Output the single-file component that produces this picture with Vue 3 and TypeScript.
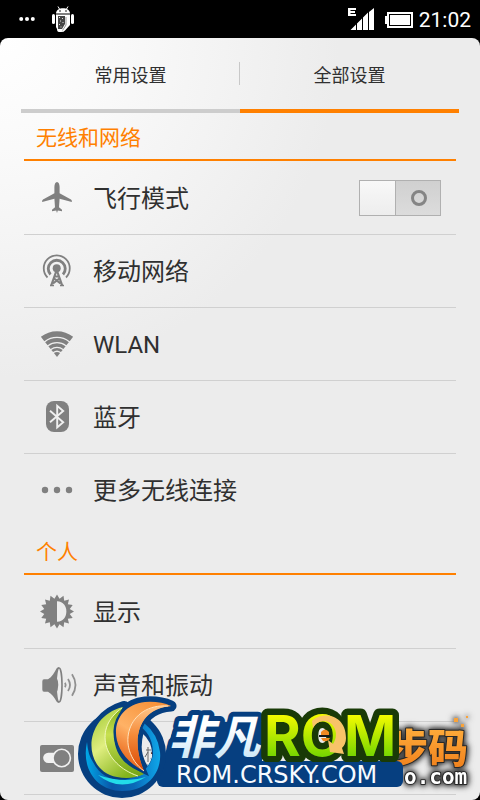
<script setup lang="ts">
import { ref } from 'vue'

type IconName = 'plane' | 'mobile' | 'wifi' | 'bluetooth' | 'more' | 'display' | 'sound' | 'toggles'

interface Item {
  icon: IconName
  label: string
  toggle?: boolean
  lang?: string
}

interface Section {
  title: string
  items: Item[]
}

const tabs: string[] = ['常用设置', '全部设置']
const activeTab = ref(1)
const airplane = ref(false)

const sections: Section[] = [
  {
    title: '无线和网络',
    items: [
      { icon: 'plane', label: '飞行模式', toggle: true },
      { icon: 'mobile', label: '移动网络' },
      { icon: 'wifi', label: 'WLAN', lang: 'en' },
      { icon: 'bluetooth', label: '蓝牙' },
      { icon: 'more', label: '更多无线连接' },
    ],
  },
  {
    title: '个人',
    items: [
      { icon: 'display', label: '显示' },
      { icon: 'sound', label: '声音和振动' },
      { icon: 'toggles', label: '通知栏' },
    ],
  },
]

// Sixteen-pointed outline of the brightness icon.
const sunPoints: string = Array.from({ length: 32 }, (_, i) => {
  const r = i % 2 === 0 ? 17 : 13
  const a = (i * Math.PI) / 16
  return `${(18 + r * Math.sin(a)).toFixed(2)},${(17.5 - r * Math.cos(a)).toFixed(2)}`
}).join(' ')
</script>

<template>
  <div class="phone" lang="zh-CN">
    <header class="status">
      <svg class="dots" viewBox="0 0 16 6" aria-hidden="true">
        <circle cx="2.2" cy="3" r="2" /><circle cx="8" cy="3" r="2" /><circle cx="13.8" cy="3" r="2" />
      </svg>
      <svg class="robot" viewBox="0 0 22 26" aria-hidden="true">
        <path d="M6 .5 7.500 3M16 .5 14.500 3" stroke="#fff" stroke-width="1" />
        <path d="M4 7.500C4 .5 18 .5 18 7.500Z" />
        <circle cx="8" cy="5" r=".8" fill="#000" /><circle cx="14" cy="5" r=".8" fill="#000" />
        <rect x="0" y="8" width="3" height="10" rx="1.5" />
        <rect x="19" y="8" width="3" height="10" rx="1.5" />
        <path d="M4 8.500H18V19L13 24.500Q12 26 9 26H7Q5 26 5 23L4 21Z" />
        <path d="M6 10H13V18L10 23H6Z" fill="#444" />
        <path d="M7.500 11v1M10.500 12v1M8.500 14.500v1M11 16v1M7.500 18v1M9 20.500v1" stroke="#ddd" />
        <path d="M14 11v8L10.500 24.500" fill="none" stroke="#999" />
      </svg>
      <span class="gap"></span>
      <svg class="signal" viewBox="0 0 26 22" aria-hidden="true">
        <path d="M0 0H8V2H2.500V3H7V5H2.500V6H8V8H0Z" />
        <path d="M2.500 22 8 16.500V22ZM9 22V15.500L14 10.500V22ZM15 22V9.500L20 4.500V22ZM21 22V4L26 0V22Z" />
      </svg>
      <svg class="battery" viewBox="0 0 28 16" aria-hidden="true">
        <path d="M2 0H28V16H2V12H0V4H2Z" />
        <rect x="4.500" y="2.500" width="21" height="11" fill="#fff" stroke="#000" />
      </svg>
      <time class="clock">21:02</time>
    </header>

    <main class="panel">
      <nav class="tabs" role="tablist">
        <button
          v-for="(tab, i) in tabs"
          :key="tab"
          type="button"
          role="tab"
          class="tab"
          :class="{ active: activeTab === i }"
          :aria-selected="activeTab === i"
          @click="activeTab = i"
        >
          {{ tab }}
        </button>
      </nav>

      <section v-for="section in sections" :key="section.title" class="section">
        <h2 class="title">{{ section.title }}</h2>
        <ul class="list">
          <li v-for="item in section.items" :key="item.label" class="item">
            <component
              :is="item.toggle ? 'label' : 'a'"
              class="row"
              :href="item.toggle ? undefined : '#'"
              :for="item.toggle ? 'airplane' : undefined"
            >
              <svg class="icon" viewBox="0 0 36 36" aria-hidden="true">
                <g v-if="item.icon === 'plane'">
                  <path d="M18 2C19.700 2 20.600 4.500 20.600 7V13.200L32 19.500Q33.400 20.500 32.800 22L20.600 18.700 20 27.200 23 29.800V31.200L18.800 30.400 18 33 17.200 30.400 13 31.200V29.800L16 27.200 15.400 18.700 3.200 22Q2.600 20.500 4 19.500L15.400 13.200V7C15.400 4.500 16.300 2 18 2Z" />
                </g>
                <g v-else-if="item.icon === 'mobile'">
                  <circle cx="17.700" cy="15.300" r="4" />
                  <path d="M8.500 24.500A13 13 0 1 1 27 24.500" fill="none" stroke="#808080" stroke-width="1.800" />
                  <path d="M11.500 21.500A8.500 8.500 0 1 1 24 21.500" fill="none" stroke="#808080" stroke-width="2.800" />
                  <path d="M17.700 17 12.200 32.500M17.700 17 23.200 32.500M15.500 23.500H20M14.500 25 21.500 30.500M21 25 14 30.500" fill="none" stroke="#808080" stroke-width="2.200" />
                  <path d="M11 32.500H15M21 32.500H25" stroke="#808080" stroke-width="1.500" />
                </g>
                <g v-else-if="item.icon === 'wifi'" fill="none" stroke="#808080">
                  <path d="M3.600 13A23 23 0 0 1 32.400 13" stroke-width="5.500" />
                  <path d="M7.400 17.800A16.900 16.900 0 0 1 28.600 17.800" stroke-width="4" />
                  <path d="M10.500 21.700A12 12 0 0 1 25.500 21.700" stroke-width="3.600" />
                  <path d="M13.200 25A7.700 7.700 0 0 1 22.800 25" stroke-width="2.800" />
                  <path d="M18 31 14.900 27.100A5 5 0 0 1 21.100 27.100Z" fill="#808080" stroke="none" />
                </g>
                <g v-else-if="item.icon === 'bluetooth'">
                  <rect x="7" y="2" width="23" height="31" rx="8" />
                  <path d="M11 11.800 24.200 23.300 18.200 28.500V6.800L24.200 12 11 23.300" fill="none" stroke="#f0f0f0" stroke-width="1.900" />
                </g>
                <g v-else-if="item.icon === 'more'">
                  <circle cx="6" cy="18" r="3.200" /><circle cx="18" cy="18" r="3.200" /><circle cx="30" cy="18" r="3.200" />
                </g>
                <g v-else-if="item.icon === 'display'">
                  <polygon :points="sunPoints" />
                  <path d="M18 7.300C30.500 7 30.500 28 18 27.700Z" fill="#ececec" />
                </g>
                <g v-else-if="item.icon === 'sound'">
                  <path d="M5 12.300H9C13 10 15.500 5.500 17.500 1.500Q18.500.3 20 .3V35.700Q18.500 35.700 17.500 34.500C15.500 30.500 13 27 9 24.700H5Q3.300 24.700 3.300 22.500V14.500Q3.300 12.300 5 12.300Z" />
                  <ellipse cx="20" cy="18" rx="3" ry="17" fill="#ececec" stroke="#808080" stroke-width="1.600" />
                  <path d="M17 9Q21.500 18 17 27Z" />
                  <path d="M26 15.700Q27.400 18 26 20.300M29 12Q33 18 29 24M33 7.300Q40 18 33 28.700" fill="none" stroke="#909090" stroke-width="1.800" />
                </g>
                <g v-else>
                  <rect x="1" y="5" width="34" height="27" rx="2" />
                  <path d="M9.300 12.700H16A10 10 0 0 0 16 23H9.300A5.150 5.150 0 0 1 9.300 12.700Z" fill="#f0f0f0" />
                  <circle cx="22.700" cy="18" r="8.700" fill="#808080" stroke="#f0f0f0" stroke-width="1.600" />
                </g>
              </svg>
              <span class="label" :lang="item.lang">{{ item.label }}</span>
              <input
                v-if="item.toggle"
                id="airplane"
                v-model="airplane"
                type="checkbox"
                role="switch"
                class="switch"
              />
            </component>
          </li>
        </ul>
      </section>
    </main>

    <svg class="marks" viewBox="70 690 410 110" role="img">
      <defs>
        <linearGradient id="amber" x1="0" y1="0" x2="0" y2="1">
          <stop offset="0" stop-color="#ffae3c" /><stop offset="1" stop-color="#ef7d1a" />
        </linearGradient>
        <linearGradient id="lime" x1="0" y1="0" x2="0" y2="1">
          <stop offset=".2" stop-color="#f2fa00" /><stop offset=".85" stop-color="#6cd400" />
        </linearGradient>
        <linearGradient id="ice" x1="0" y1="0" x2="0" y2="1">
          <stop offset=".4" stop-color="#fff" /><stop offset="1" stop-color="#bfe2f5" />
        </linearGradient>
        <linearGradient id="sea" x1="0" y1="0" x2="1" y2="0">
          <stop offset="0" stop-color="#00a9e8" /><stop offset=".35" stop-color="#0a55a8" />
          <stop offset=".65" stop-color="#0a68b8" /><stop offset="1" stop-color="#0fa8ea" />
        </linearGradient>
        <linearGradient id="leaf" x1="0" y1="0" x2=".6" y2="1">
          <stop offset="0" stop-color="#9cc62c" /><stop offset=".5" stop-color="#e0ee80" /><stop offset="1" stop-color="#84b41c" />
        </linearGradient>
        <linearGradient id="leaf-edge" x1=".5" y1="0" x2=".5" y2="1">
          <stop offset="0" stop-color="#7fae18" /><stop offset=".4" stop-color="#c8e050" /><stop offset="1" stop-color="#74a414" />
        </linearGradient>
        <linearGradient id="flame" x1=".7" y1="0" x2=".2" y2="1">
          <stop offset="0" stop-color="#f7923a" /><stop offset=".5" stop-color="#ffb266" /><stop offset="1" stop-color="#e4560c" />
        </linearGradient>
        <linearGradient id="flame-edge" x1=".5" y1="0" x2=".5" y2="1">
          <stop offset="0" stop-color="#ffc88c" /><stop offset=".45" stop-color="#f58a38" /><stop offset="1" stop-color="#d94806" />
        </linearGradient>
      </defs>

      <g class="pixel">
        <text x="388" y="763" font-size="40" fill="url(#amber)" stroke="#282828" stroke-width="2">步码</text>
        <text x="404" y="784" font-size="21" fill="#fff" stroke="#282828" stroke-width="2">o.com</text>
        <path d="M454 718h4v4h-4zM461 724h3v3h-3zM466 716h2v2h-2z" fill="#f9a33a" />
      </g>

      <g class="plate">
        <path d="M176 722H262V784H160L163 759Z" fill="#063f80" />
        <rect x="157" y="761" width="246" height="26" rx="6" fill="#063f80" />
        <text class="hanzi" x="168" y="754" font-size="46" fill="url(#ice)" stroke="#063f80" stroke-width="10">非凡</text>
        <text class="rom" x="264" y="756" font-size="56" fill="url(#lime)" stroke="#193a07" stroke-width="13">ROM</text>
        <path d="M312 721C321 711 346 713 346 738Q346 744 342 748L344 754 330 752 328 740 333 744C341 732 332 720 323 721Q316 722 313 728Z" fill="#f8c368" />
        <path d="M321 732Q325 727 329 732V735H321ZM321 738H330Q328 742 323 741Z" fill="#f28a22" />
        <path d="M319 736H331" stroke="#171717" stroke-width="2" />
        <rect x="258" y="762" width="144" height="24" rx="5" fill="#063f80" />
        <text class="site" x="176" y="783" font-size="24" fill="#f7fbff">ROM.CRSKY.COM</text>
      </g>

      <g class="swirl">
        <path d="M78 754A44 44 0 1 0 166 754A44 44 0 1 0 78 754ZM142 733Q153 742 152 757Q150 764 146 768Q136 751 142 733Z" fill="#063f80" fill-rule="evenodd" />
        <path d="M124 707C84 719 82 769 119 777Z" fill="#063f80" stroke="#063f80" stroke-width="12" stroke-linejoin="round" />
        <path d="M142 768C104 751 109 706 145 702Q160 701 171 706C141 708 129 736 142 768Z" fill="#063f80" stroke="#063f80" stroke-width="11" stroke-linejoin="round" />
        <path d="M143 738Q152 745 151 757Q149 763 147 765Q139 751 143 738Z" fill="#ececec" />
        <path d="M146 750H151M148 747V762M148 752 145 757" stroke="#666" stroke-width="1" />
        <path d="M87 742C81 769 97 791 122 791C149 791 162 771 160 752Q158 734 144 723L141 727Q153 736 153 754C150 778 109 794 93 762Q88 755 87 742Z" fill="url(#sea)" />
        <path d="M98 775Q120 793 146 777Q124 784 98 775Z" fill="#22dbe9" />
        <path d="M123 707C82 717 82 771 117 777Q131 780 144 774C112 763 101 733 123 707Z" fill="url(#leaf)" />
        <path d="M123 707C93 728 103 764 138 776Q142 775 144 773C112 763 107 733 123 707Z" fill="url(#leaf-edge)" />
        <path d="M122 708C93 728 103 764 138 776" fill="none" stroke="#f0f8b8" stroke-width="1" />
        <path d="M144 771C104 751 109 706 145 702Q160 701 171 706C141 708 129 736 144 771Z" fill="url(#flame)" stroke="#063f80" stroke-width="5" paint-order="stroke" />
        <path d="M171 706C128 702 114 748 144 771C129 736 141 708 171 706Z" fill="url(#flame-edge)" />
        <path d="M168 706C128 703 114 748 144 771" fill="none" stroke="#ffe2bc" stroke-width="1" />
      </g>
    </svg>
  </div>
</template>

<style>
body {
  margin: 0;
  background: #000;
}
</style>

<style scoped>
.phone {
  position: relative;
  display: flex;
  flex-direction: column;
  min-height: 100vh;
  background: #000;
  color: #303030;
  font-family: 'Noto Sans CJK SC', sans-serif;
}

.status {
  display: flex;
  align-items: center;
  box-sizing: border-box;
  height: 38px;
  padding: 0 9px 0 19px;
  fill: #fff;
}

.dots {
  width: 16px;
  height: 6px;
  margin-right: 17px;
}

.robot {
  width: 22px;
  height: 26px;
}

.gap {
  flex: 1;
}

.signal {
  width: 26px;
  height: 22px;
  margin-right: 11px;
}

.battery {
  width: 28px;
  height: 16px;
  margin: 2px 6px 0 0;
}

.clock {
  padding-top: 2px;
  color: #fff;
  font-family: Roboto, sans-serif;
  font-size: 21px;
  line-height: 24px;
}

.panel {
  flex: 1;
  border-radius: 8px;
  background: radial-gradient(circle at 0 0, #fff 0, #fafafa 110px, #ececec 340px);
}

.tabs {
  display: flex;
  padding: 0 21px;
}

.tab {
  position: relative;
  flex: 1;
  height: 75px;
  padding: 0;
  border: 0;
  border-bottom: 4px solid #cdcdcd;
  background: none;
  color: inherit;
  font: inherit;
  font-size: 18px;
  cursor: pointer;
}

.tab.active {
  border-color: #ff8000;
}

.tab + .tab::before {
  content: '';
  position: absolute;
  top: 24px;
  left: -1px;
  width: 1px;
  height: 23px;
  background: #c8c8c8;
}

.section {
  padding: 0 24px;
}

.title {
  box-sizing: border-box;
  height: 48px;
  margin: 0;
  padding: 0 12px;
  border-bottom: 2px solid #ff8000;
  color: #ff8000;
  font-size: 21px;
  font-weight: 400;
  line-height: 46px;
}

.list {
  margin: 0;
  padding: 1px 0 0;
  list-style: none;
}

.row {
  display: flex;
  align-items: center;
  gap: 18px;
  height: 72px;
  padding: 0 15px;
  border-bottom: 1px solid #d0d0d0;
  color: inherit;
  font-size: 24px;
  line-height: 36px;
  text-decoration: none;
}

.section:nth-of-type(1) .item:last-child .row {
  border-bottom-color: transparent;
}

.icon {
  flex: none;
  width: 36px;
  height: 36px;
  overflow: visible;
  fill: #808080;
}

.label {
  flex: 1;
  padding-bottom: 2px;
}

.label:lang(en) {
  padding: 2px 0 0;
  font-family: Roboto, sans-serif;
}

.switch {
  appearance: none;
  display: flex;
  align-items: center;
  justify-content: center;
  box-sizing: border-box;
  width: 82px;
  height: 36px;
  margin: 0;
  padding-left: 37px;
  border: 1px solid #b0b0b0;
  background:
    linear-gradient(#b0b0b0, #b0b0b0) 35px 0 / 1px 100% no-repeat,
    linear-gradient(#f8f8f8, #ededed) 0 0 / 35px 100% no-repeat,
    linear-gradient(#d0d0d0, #dcdcdc);
}

.switch::before {
  content: '';
  box-sizing: border-box;
  width: 16px;
  height: 16px;
  border: 3px solid #858585;
  border-radius: 50%;
}

.switch:checked {
  padding: 0 37px 0 0;
  background:
    linear-gradient(#b0b0b0, #b0b0b0) 44px 0 / 1px 100% no-repeat,
    linear-gradient(#f8f8f8, #ededed) 45px 0 / 35px 100% no-repeat,
    linear-gradient(#ff9a30, #ff8000);
}

.marks {
  position: absolute;
  right: 0;
  bottom: 0;
  width: 410px;
  height: 110px;
  pointer-events: none;
}

.marks text {
  font-weight: 700;
  paint-order: stroke;
  stroke-linejoin: round;
}

.pixel {
  filter: drop-shadow(0 0 3px #333) drop-shadow(0 0 2px #555);
}

.pixel text {
  font-family: 'DejaVu Sans Mono', 'Noto Sans CJK SC', sans-serif;
  font-weight: 900;
}

.marks .hanzi {
  font-family: 'Noto Sans CJK SC', sans-serif;
  font-style: italic;
}

.marks .rom {
  font-family: Inter, sans-serif;
}

.marks .site {
  font-family: 'DejaVu Sans', sans-serif;
  font-weight: 400;
}
</style>
